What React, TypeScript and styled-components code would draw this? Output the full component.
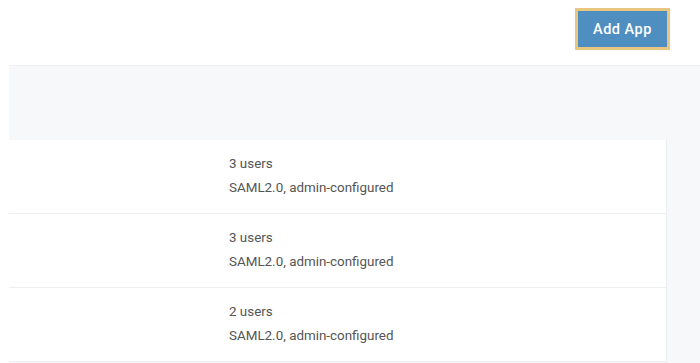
import styled, { createGlobalStyle } from "styled-components";

interface AppRow {
  id: number;
  users: number;
  protocol: string;
}

const rows: AppRow[] = [
  { id: 1, users: 3, protocol: "SAML2.0, admin-configured" },
  { id: 2, users: 3, protocol: "SAML2.0, admin-configured" },
  { id: 3, users: 2, protocol: "SAML2.0, admin-configured" },
];

const App = () => (
  <>
    <GlobalStyle />
    <Page>
      <Header>
        <AddButton type="button">Add App</AddButton>
      </Header>
      <Content>
        <Toolbar />
        <Table>
          {rows.map((row) => (
            <Row key={row.id}>
              <NameCell />
              <InfoCell>
                <Line>{row.users} users</Line>
                <Line>{row.protocol}</Line>
              </InfoCell>
            </Row>
          ))}
        </Table>
      </Content>
    </Page>
  </>
);

const GlobalStyle = createGlobalStyle`
  html, body {
    margin: 0;
    padding: 0;
    background: #ffffff;
    font-family: Roboto, "Liberation Sans", sans-serif;
  }
`;

const Page = styled.div`
  width: 700px;
  height: 363px;
  overflow: hidden;
  display: flex;
  flex-direction: column;
`;

const Header = styled.div`
  height: 65px;
  display: flex;
  justify-content: flex-end;
  align-items: flex-start;
  padding: 8px 30px 0 0;
  box-sizing: border-box;
`;

const AddButton = styled.button`
  width: 95px;
  height: 42px;
  border: 3px solid #e8c67f;
  background: #4f8ec0;
  color: #ffffff;
  font-family: Roboto, "Liberation Sans", sans-serif;
  font-size: 14.5px;
  font-weight: 500;
  letter-spacing: 0.5px;
  padding: 0;
  cursor: pointer;
`;

const Content = styled.div`
  flex: 1;
  margin-left: 9px;
  background: #f7f8fa;
  border-top: 1px solid #eceef1;
  padding-right: 33px;
`;

const Toolbar = styled.div`
  height: 74px;
`;

const Table = styled.div`
  background: #ffffff;
  border-right: 1px solid #eceef1;
`;

const Row = styled.div`
  display: grid;
  grid-template-columns: 220px 1fr;
  height: 73px;
  border-bottom: 1px solid #eceef1;
  box-sizing: content-box;
`;

const NameCell = styled.div``;

const InfoCell = styled.div`
  padding-top: 12px;
  display: flex;
  flex-direction: column;
`;

const Line = styled.div`
  font-size: 13.4px;
  line-height: 24px;
  color: #555555;
`;

export default App;
